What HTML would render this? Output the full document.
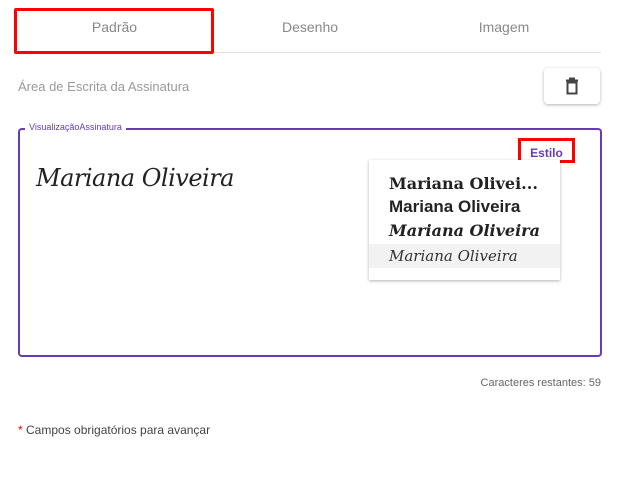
<!DOCTYPE html>
<html><head><meta charset="utf-8"><style>
body{margin:0;width:623px;height:479px;background:#fff;font-family:"Liberation Sans",sans-serif;position:relative;overflow:hidden}
.a{position:absolute}
</style></head><body>
<div class="a" style="left:16px;top:52px;width:585px;height:1px;background:#e0e0e0"></div>
<div class="a" style="left:14px;top:8px;width:194px;height:40px;border:3px solid #f00;border-radius:2px"></div>
<div class="a" style="left:14px;top:19px;width:201px;text-align:center;font-size:14px;color:#888">Padrão</div>
<div class="a" style="left:210px;top:19px;width:200px;text-align:center;font-size:14px;color:#888">Desenho</div>
<div class="a" style="left:404px;top:19px;width:200px;text-align:center;font-size:14px;color:#888">Imagem</div>
<div class="a" style="left:18px;top:79px;font-size:13px;color:#999">Área de Escrita da Assinatura</div>
<div class="a" style="left:544px;top:68px;width:56px;height:36px;border-radius:4px;background:#fff;box-shadow:0 1px 3px rgba(0,0,0,.3)">
<svg width="56" height="36" viewBox="0 0 56 36"><path d="M22 12.5h12" stroke="#444" stroke-width="2"/><path d="M25 11.5v-2h6v2" fill="#444"/><path d="M23.5 14.5h9v11h-9z" fill="none" stroke="#444" stroke-width="2"/></svg></div>
<div class="a" style="left:18px;top:128px;width:580px;height:225px;border:2px solid #673ab7;border-radius:4px"></div>
<div class="a" style="left:25px;top:122px;background:#fff;padding:0 4px;font-size:9px;color:#673ab7">VisualizaçãoAssinatura</div>
<div class="a" style="left:36px;top:164px;font-family:'DejaVu Serif',serif;font-style:italic;font-size:24px;color:#222;letter-spacing:-0.5px">Mariana Oliveira</div>
<div class="a" style="left:518px;top:138px;width:57px;height:25px;border:3px solid #f00;box-sizing:border-box"></div>
<div class="a" style="left:518px;top:146px;width:57px;text-align:center;font-size:12px;font-weight:bold;color:#673ab7">Estilo</div>
<div class="a" style="left:369px;top:160px;width:191px;height:120px;background:#fff;box-shadow:0 1px 3px rgba(0,0,0,.3)">
<div class="a" style="left:0;top:84px;width:191px;height:24px;background:#f2f2f2"></div>
<div class="a" style="left:20px;top:14px;font-family:'DejaVu Serif',serif;font-weight:bold;font-size:16px;color:#222">Mariana Olivei...</div>
<div class="a" style="left:20px;top:37px;font-weight:bold;font-size:17px;color:#222">Mariana Oliveira</div>
<div class="a" style="left:20px;top:61px;font-family:'DejaVu Serif',serif;font-weight:bold;font-style:italic;font-size:16px;color:#222">Mariana Oliveira</div>
<div class="a" style="left:20px;top:87px;font-family:'DejaVu Serif',serif;font-style:italic;font-size:15px;color:#333">Mariana Oliveira</div>
</div>
<div class="a" style="left:400px;top:377px;width:201px;text-align:right;font-size:11px;color:#666">Caracteres restantes: 59</div>
<div class="a" style="left:18px;top:423px;font-size:12px;color:#444"><span style="color:#f00">*</span> Campos obrigatórios para avançar</div>
</body></html>
